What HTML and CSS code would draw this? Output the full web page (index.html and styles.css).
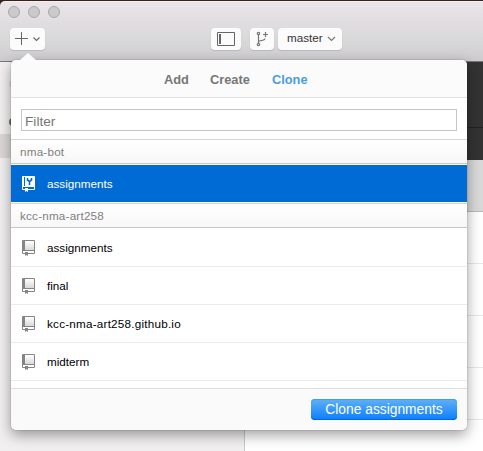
FILE: index.html
```html
<!DOCTYPE html>
<html lang="en">
<head>
<meta charset="utf-8">
<title>Clone a repository</title>
<link rel="stylesheet" href="styles.css">
</head>
<body>
<svg class="defs" width="0" height="0">
  <defs>
    <linearGradient id="cover" x1="0" y1="0" x2="0" y2="1"><stop offset="0" stop-color="#fff"/><stop offset="1" stop-color="#d9d9d9"/></linearGradient>
    <symbol id="repo" viewBox="0 0 14 16">
      <path d="M1 0h11q1 0 1 1v12q0 1-1 1H6v2l-1.500-1L3 16v-2H1q-1 0-1-1V1q0-1 1-1z" fill="#858585"/>
      <path d="M3 1h9v9H3z" fill="url(#cover)"/>
      <path d="M1 11h11v2H6v-1H3v1H1z" fill="#fff"/>
    </symbol>
  </defs>
</svg>
<div class="window">
  <header class="toolbar">
    <div class="lights"><i></i><i></i><i></i></div>
    <div class="tools">
      <button class="tool add"><svg width="35" height="22" fill="none" stroke="#666"><path d="M11.500 4v13M5 10.500h13"/><path d="M23.500 9.500l3 3 3-3" stroke-width="1.100"/></svg></button>
      <button class="tool panel"><svg width="30" height="22" fill="none" stroke="#666"><path d="M6.500 4.500h17v13h-17z"/><path d="M9 6v10" stroke-width="2"/></svg></button>
      <button class="tool branch"><svg width="24" height="22" fill="none" stroke="#777" stroke-width="1.200"><circle cx="8.500" cy="5.500" r="1.200"/><circle cx="8.500" cy="16.500" r="1.200"/><path d="M8.500 7v8M8.500 14c0-2 6-.5 6.500-3.500M15.500 4v5M13 6.500h5"/></svg></button>
      <button class="tool master"><span>master</span><svg width="9" height="6" fill="none" stroke="#777" stroke-width="1.200"><path d="M1 1l3.500 3.500L8 1"/></svg></button>
    </div>
  </header>
  <div class="body">
    <aside class="sidebar"><i class="avatar"></i><i class="avatar brown"></i><div class="current"></div></aside>
    <main class="content"><div class="dark"></div><div class="dark second"></div><div class="summary"></div><div class="line"></div><div class="line"></div><div class="line"></div><div class="line"></div></main>
  </div>
</div>
<section class="popover">
  <nav class="tabs"><span class="tab-add">Add</span><span class="tab-create">Create</span><span class="tab-clone">Clone</span></nav>
  <div class="search"><input type="text" placeholder="Filter"></div>
  <h2 class="owner">nma-bot</h2>
  <div class="selected">
    <svg width="14" height="16"><path d="M1 0h11q1 0 1 1v12q0 1-1 1H6v2l-1.500-1L3 16v-2H1q-1 0-1-1V1q0-1 1-1z" fill="#fff"/><path d="M1 11h11v2H6v-1H3v1H1z" fill="#006bd4"/><path d="M2.500 1v9" stroke="#006bd4"/><path d="M5.500 2v2l2 1.500 2-1.500V2M7.500 5.500V9" fill="none" stroke="#006bd4" stroke-width="1.600"/></svg>
    <span>assignments</span>
  </div>
  <h2 class="owner second-owner">kcc-nma-art258</h2>
  <ul class="repos">
    <li><svg width="14" height="16"><use href="#repo"/></svg><span>assignments</span></li>
    <li><svg width="14" height="16"><use href="#repo"/></svg><span>final</span></li>
    <li><svg width="14" height="16"><use href="#repo"/></svg><span class="long">kcc-nma-art258.github.io</span></li>
    <li><svg width="14" height="16"><use href="#repo"/></svg><span>midterm</span></li>
  </ul>
  <footer class="actions"><button class="clone">Clone assignments</button></footer>
</section>
</body>
</html>
```

FILE: styles.css
```css
* { box-sizing: border-box; }
body { margin: 0; width: 483px; height: 451px; overflow: hidden; position: relative; background: #35221f; font-family: "Liberation Sans", Arial, sans-serif; font-size: 11.7px; }
.defs { position: absolute; }
button { border: 0; padding: 0; font-family: inherit; }
.window { height: 451px; padding-top: 1px; display: flex; flex-direction: column; }
.toolbar { height: 61px; flex: none; border-top: 1px solid #f5eff2; border-bottom: 1px solid #777; border-top-left-radius: 5px; background: linear-gradient(#e9e4e8, #d9d8d9 65%, #cdcbcf); padding: 4px 0 0 8px; }
.lights { display: flex; gap: 8px; height: 12px; }
.lights i { width: 12px; height: 12px; border-radius: 50%; background: #cbcacb; border: 1px solid #aaa8aa; }
.tools { display: flex; margin: 10px 0 0 2px; }
.tool { height: 22px; border-radius: 4px; background: #fbfbfb; box-shadow: 0 1px 1px #b9b7ba; }
.tool svg { display: block; }
.add { width: 35px; }
.panel { width: 30px; margin-left: 166px; }
.branch { width: 24px; margin-left: 9px; }
.master { width: 64px; margin-left: 4px; padding-left: 9px; display: flex; align-items: center; gap: 4px; font-size: 11.7px; line-height: 14px; color: #333; }
.master span { padding-bottom: 2px; }
.body { flex: 1; display: flex; }
.sidebar { width: 245px; background: #f1eff0; border-right: 1px solid #c8c8c8; padding: 18px 0 0 9px; }
.avatar { display: block; width: 8px; height: 8px; border-radius: 50%; background: #ddd; }
.brown { margin-top: 30px; background: #8a6a57; }
.current { margin: 8px 0 0 -9px; height: 24px; background: #dcd8d7; }
.content { flex: 1; background: #fff; }
.dark { height: 66px; background: #333; border-bottom: 1px solid #222; }
.second { height: 32px; border: 0; }
.summary { height: 52px; background: #d9d9d9; border-bottom: 1px solid #b9b9b9; }
.line { height: 52px; border-bottom: 1px solid #e8e8e8; }
.popover { position: absolute; left: 11px; top: 60px; width: 456px; height: 370px; border-radius: 5px; background: #fff; box-shadow: 0 0 1px rgba(0,0,0,.7), 0 5px 14px rgba(0,0,0,.38); }
.popover::before { content: ""; position: absolute; top: -7px; left: 9px; border: 8px solid transparent; border-top: 0; border-bottom: 7px solid #fbfbfb; }
.tabs { height: 38px; border-bottom: 1px solid #e3e3e3; border-radius: 5px 5px 0 0; background: #fbfbfb; padding-left: 153px; display: flex; line-height: 39px; font-size: 12.8px; font-weight: bold; color: #777; }
.tab-add { width: 46px; }
.tab-create { width: 62px; }
.tab-clone { color: #4a9edb; }
.search { height: 41px; padding: 11px 10px 0; }
.search input { display: block; width: 436px; height: 22px; border: 1px solid #c6c6c6; border-radius: 0; padding: 2px 3px 0; background: #fff; font: 13.7px "Liberation Sans", Arial, sans-serif; }
.search input::placeholder { color: #777; }
.owner { margin: 0; height: 26px; padding-left: 9px; border-top: 1px solid #d6d6d6; border-bottom: 1px solid #fff; box-shadow: inset 0 -1px #c8c8c8; background: linear-gradient(#fff, #f7f7f7); font-size: 11.7px; font-weight: normal; letter-spacing: .2px; line-height: 23px; color: #808080; }
.selected { height: 38px; padding: 0 0 1px 11px; background: #006bd4 linear-gradient(#fff, #fff) 0 100% / 100% 1px no-repeat; color: #fff; display: flex; align-items: center; gap: 11px; }
.repos { list-style: none; margin: 0; padding: 0; height: 159px; color: #000; }
.repos li { height: 38px; padding-left: 11px; border-bottom: 1px solid #ebebeb; display: flex; align-items: center; gap: 11px; }
.repos svg, .selected svg { margin-top: 1px; }
.long { letter-spacing: .22px; }
.actions { height: 42px; border-top: 1px solid #dfdfdf; border-radius: 0 0 5px 5px; background: #fafafa; padding: 10px 10px 0 300px; }
.clone { display: block; width: 146px; height: 21px; border-radius: 4px; background: linear-gradient(#60b1f5, #0a7eff); box-shadow: inset 0 1px #3f9fec, inset 0 -1px #0068df; color: #fff; font-size: 13.8px; line-height: 21px; }
```
